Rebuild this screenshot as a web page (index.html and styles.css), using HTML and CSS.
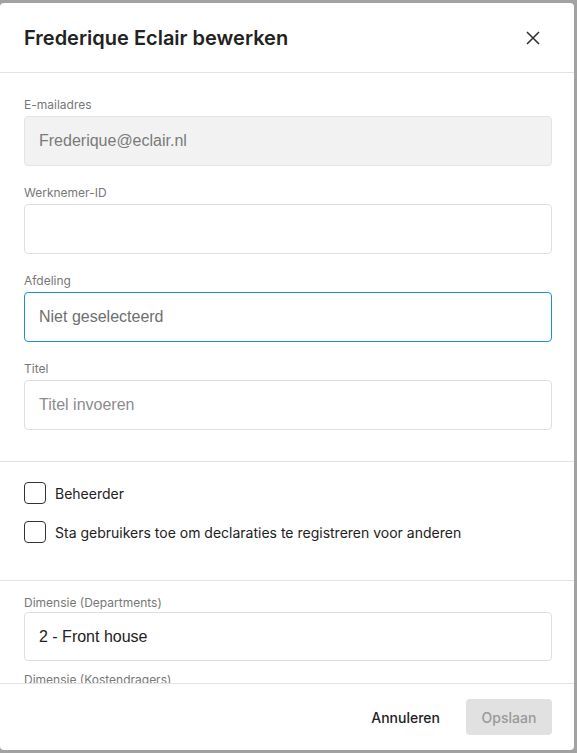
FILE: index.html
```html
<!DOCTYPE html>
<html lang="nl">
<head>
<meta charset="utf-8">
<title>Frederique Eclair bewerken</title>
<link rel="stylesheet" href="styles.css">
</head>
<body>
<div class="modal">
  <div class="header">
    <h1 class="title">Frederique Eclair bewerken</h1>
    <button class="close" aria-label="Sluiten">
      <svg width="14" height="14" viewBox="0 0 14 14"><path d="M1 1L13 13M13 1L1 13" stroke="#333" stroke-width="1.6" fill="none"/></svg>
    </button>
  </div>
  <div class="body">
    <div class="section fields">
      <div class="field">
        <div class="label">E-mailadres</div>
        <div class="input disabled">Frederique@eclair.nl</div>
      </div>
      <div class="field">
        <div class="label">Werknemer-ID</div>
        <div class="input"></div>
      </div>
      <div class="field">
        <div class="label">Afdeling</div>
        <div class="input focused muted">Niet geselecteerd</div>
      </div>
      <div class="field">
        <div class="label">Titel</div>
        <div class="input placeholder">Titel invoeren</div>
      </div>
    </div>
    <div class="section checks">
      <label class="check"><span class="box"></span><span class="check-text">Beheerder</span></label>
      <label class="check"><span class="box"></span><span class="check-text">Sta gebruikers toe om declaraties te registreren voor anderen</span></label>
    </div>
    <div class="section dims">
      <div class="field">
        <div class="label">Dimensie (Departments)</div>
        <div class="input value">2 - Front house</div>
      </div>
      <div class="field">
        <div class="label">Dimensie (Kostendragers)</div>
        <div class="input"></div>
      </div>
    </div>
  </div>
  <div class="footer">
    <button class="btn cancel">Annuleren</button>
    <button class="btn save" disabled>Opslaan</button>
  </div>
</div>
</body>
</html>
```

FILE: styles.css
```css
html, body {
  margin: 0;
  padding: 0;
  background: #a2a2a2;
  height: 100%;
  overflow: hidden;
}
body {
  font-family: Inter, "Noto Sans", sans-serif;
  color: #222;
}
.modal {
  width: 574px;
  height: 747px;
  margin-top: 3px;
  background: #fff;
  border-radius: 4px;
  display: flex;
  flex-direction: column;
  overflow: hidden;
}
.header {
  height: 70px;
  box-sizing: border-box;
  border-bottom: 1px solid #e2e2e2;
  display: flex;
  align-items: center;
  justify-content: space-between;
  padding: 0 34px 0 24px;
  flex: none;
}
.title {
  margin: 0;
  font-size: 20px;
  font-weight: 600;
  color: #222;
}
.close {
  border: 0;
  background: none;
  padding: 0;
  width: 14px;
  height: 14px;
  display: flex;
}
.body {
  flex: 1;
  overflow: hidden;
}
.section {
  padding-left: 24px;
  padding-right: 22px;
  border-bottom: 1px solid #e2e2e2;
}
.fields {
  padding-top: 23px;
  padding-bottom: 31px;
  display: flex;
  flex-direction: column;
  gap: 18px;
}
.field {
  display: flex;
  flex-direction: column;
  gap: 4px;
}
.label {
  font-size: 12px;
  line-height: 16px;
  color: #777;
  padding-top: 1px;
  margin-bottom: -1px;
}
.input {
  height: 50px;
  box-sizing: border-box;
  border: 1px solid #dedede;
  border-radius: 4px;
  padding: 0 14px;
  display: flex;
  align-items: center;
  font-family: "Liberation Sans", Arial, sans-serif;
  font-size: 16px;
  color: #222;
}
.input.disabled {
  background: #f2f2f2;
  border-color: #e4e4e4;
  color: #7a7a7a;
}
.input.focused {
  border-color: #1b8fe3;
}
.input.muted {
  color: #6e6e6e;
}
.input.placeholder {
  color: #8c8c8c;
}
.checks {
  padding-top: 20px;
  padding-bottom: 37px;
  display: flex;
  flex-direction: column;
  gap: 17px;
}
.check {
  display: flex;
  align-items: center;
  gap: 9px;
  height: 22px;
  font-size: 14px;
  line-height: 20px;
  color: #222;
}
.check-text {
  padding-top: 2px;
}
.box {
  width: 22px;
  height: 22px;
  box-sizing: border-box;
  border: 1.5px solid #333;
  border-radius: 4px;
  flex: none;
}
.dims {
  padding-top: 13px;
  display: flex;
  flex-direction: column;
  gap: 10px;
  border-bottom: 0;
}
.dims .field {
  gap: 2px;
}
.dims .input {
  height: 49px;
}
.footer {
  flex: none;
  height: 67px;
  box-sizing: border-box;
  border-top: 1px solid #e2e2e2;
  display: flex;
  align-items: center;
  justify-content: flex-end;
  gap: 14px;
  padding: 0 22px 0 24px;
}
.btn {
  font-family: Inter, "Noto Sans", sans-serif;
  font-size: 14px;
  font-weight: 500;
  height: 36px;
  border: 0;
  border-radius: 4px;
  background: none;
  padding: 0 12px;
}
.cancel {
  color: #222;
}
.save {
  width: 86px;
  background: #e1e1e1;
  color: #999;
  padding: 0;
}
```
